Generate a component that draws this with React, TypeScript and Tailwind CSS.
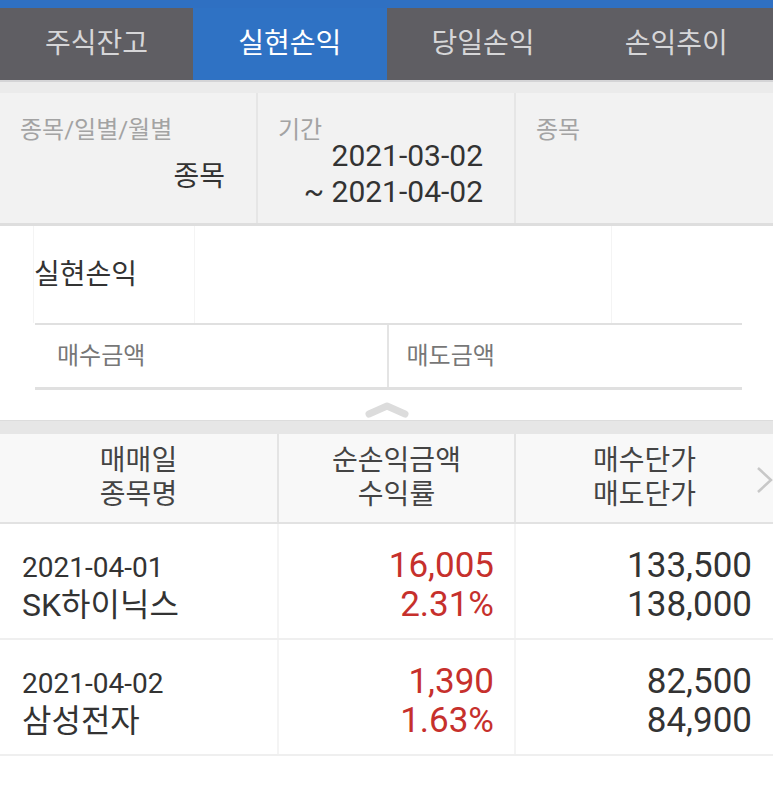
import React from "react";

const tabs = ["주식잔고", "실현손익", "당일손익", "손익추이"];

const rows = [
  { date: "2021-04-01", name: "SK하이닉스", profit: "16,005", rate: "2.31%", buy: "133,500", sell: "138,000" },
  { date: "2021-04-02", name: "삼성전자", profit: "1,390", rate: "1.63%", buy: "82,500", sell: "84,900" },
];

export default function App() {
  return (
    <div className="w-[773px] h-[792px] bg-white overflow-hidden font-[Roboto,'Noto_Sans_CJK_KR',sans-serif]">
      {/* top tabs */}
      <div className="h-2 bg-[#2f70c2]" />
      <div className="grid grid-cols-4 h-[72px] bg-[#5f5e63]">
        {tabs.map((t, i) => (
          <div
            key={t}
            className={
              i === 1
                ? "flex items-center justify-center bg-[#2f72c4] text-white text-[28px]"
                : "flex items-center justify-center text-[#d6d6d8] text-[28px]"
            }
          >
            {t}
          </div>
        ))}
      </div>
      <div className="h-[13px] bg-[#ebebeb] border-t-2 border-[#d4d4d6]" />

      {/* filter */}
      <div className="grid grid-cols-[256px_2px_256px_2px_1fr] h-[133px] bg-[#f2f2f2] border-b-[3px] border-[#dedede]">
        <div className="flex flex-col px-5 pt-[22px]">
          <span className="text-[24px] leading-[30px] text-[#a3a3a3]">종목/일별/월별</span>
          <span className="self-end mr-[11px] mt-[15px] text-[28px] leading-[34px] text-[#333]">종목</span>
        </div>
        <div className="bg-[#e6e6e6]" />
        <div className="flex flex-col px-5 pt-[22px]">
          <span className="text-[24px] leading-[30px] text-[#a3a3a3]">기간</span>
          <span className="self-end -mt-[7px] mr-[11px] text-[30px] leading-[36px] text-[#333]">2021-03-02</span>
          <span className="self-end mr-[11px] text-[30px] leading-[36px] text-[#333]">~ 2021-04-02</span>
        </div>
        <div className="bg-[#e6e6e6]" />
        <div className="flex flex-col px-5 pt-[22px]">
          <span className="text-[24px] leading-[30px] text-[#a3a3a3]">종목</span>
        </div>
      </div>

      {/* realized summary */}
      <div className="bg-white">
        <div className="mx-[33px] grid grid-cols-[161px_417px_1fr] h-[97px] border-l border-[#f4f4f4]">
          <div className="flex items-center text-[28px] text-[#333] border-r border-[#f4f4f4]">실현손익</div>
          <div className="border-r border-[#f4f4f4]" />
          <div />
        </div>
        <div className="ml-[35px] mr-[31px] grid grid-cols-2 h-[67px] border-t-2 border-b-[3px] border-[#e0e0e0]">
          <div className="flex items-center pl-[22px] text-[24px] text-[#777] border-r-2 border-[#e4e4e4]">매수금액</div>
          <div className="flex items-center pl-[18px] text-[24px] text-[#777]">매도금액</div>
        </div>
        <div className="flex justify-center h-[30px] pt-[12px]">
          <svg width="46" height="16" viewBox="0 0 46 16">
            <path d="M5 12 L23 4 L41 12" fill="none" stroke="#dcdcdc" strokeWidth="7" strokeLinecap="round" strokeLinejoin="round" />
          </svg>
        </div>
      </div>
      <div className="h-[14px] bg-[#e6e6e6] border-t border-[#dcdcdc]" />

      {/* table header */}
      <div className="relative grid grid-cols-[277px_2px_235px_2px_1fr] h-[90px] bg-[#f8f8f8] border-b-2 border-[#e2e2e2]">
        <div className="flex flex-col items-center justify-center text-[28px] leading-[34px] text-[#444]">
          <span>매매일</span>
          <span>종목명</span>
        </div>
        <div className="bg-[#e4e4e4]" />
        <div className="flex flex-col items-center justify-center text-[28px] leading-[34px] text-[#444]">
          <span>순손익금액</span>
          <span>수익률</span>
        </div>
        <div className="bg-[#e4e4e4]" />
        <div className="flex flex-col items-center justify-center text-[28px] leading-[34px] text-[#444]">
          <span>매수단가</span>
          <span>매도단가</span>
        </div>
        <svg className="absolute right-0 top-[32px]" width="17" height="28" viewBox="0 0 17 28">
          <path d="M2 2 L15 14 L2 26" fill="none" stroke="#c8c8c8" strokeWidth="2.5" />
        </svg>
      </div>

      {/* rows */}
      {rows.map((r) => (
        <div key={r.date} className="grid grid-cols-[277px_2px_235px_2px_1fr] h-[116px] border-b-2 border-[#efefef]">
          <div className="flex flex-col justify-center pl-[22px] pt-[10px] text-[#333]">
            <span className="text-[28px] leading-[38px]">{r.date}</span>
            <span className="text-[32px] leading-[36px]">{r.name}</span>
          </div>
          <div className="bg-[#f4f4f4]" />
          <div className="flex flex-col items-end justify-center pr-[20px] pt-[8px] text-[35px] leading-[39px] text-[#c6302c]">
            <span>{r.profit}</span>
            <span>{r.rate}</span>
          </div>
          <div className="bg-[#f4f4f4]" />
          <div className="flex flex-col items-end justify-center pr-[21px] pt-[8px] text-[35px] leading-[39px] text-[#333]">
            <span>{r.buy}</span>
            <span>{r.sell}</span>
          </div>
        </div>
      ))}
    </div>
  );
}
